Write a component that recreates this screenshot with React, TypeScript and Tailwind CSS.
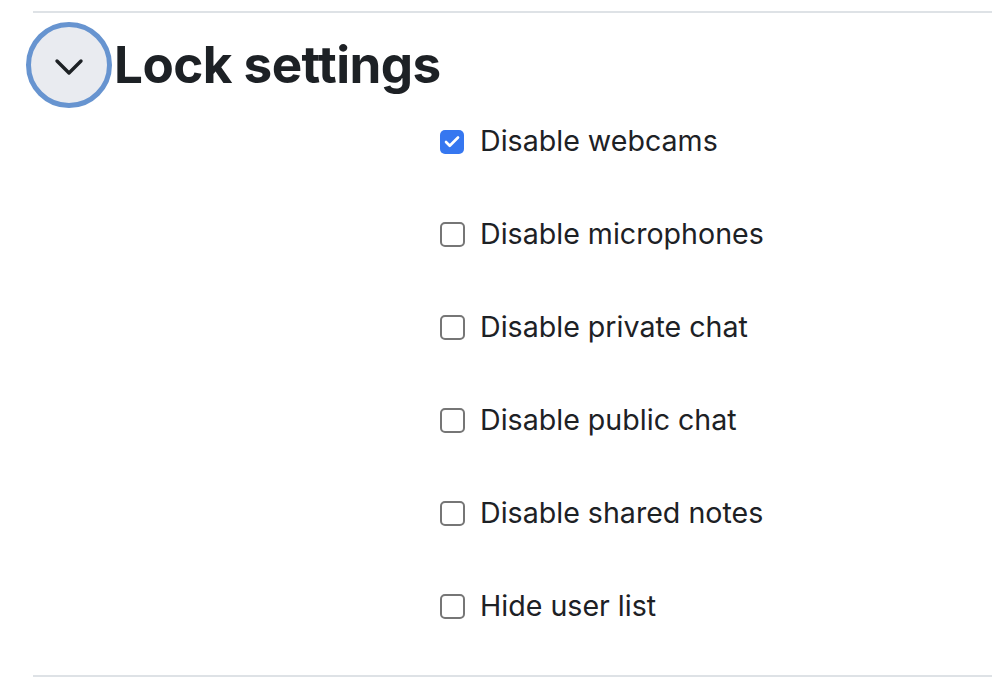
import { Check } from "lucide-react";

const options = [
  { label: "Disable webcams", checked: true },
  { label: "Disable microphones", checked: false },
  { label: "Disable private chat", checked: false },
  { label: "Disable public chat", checked: false },
  { label: "Disable shared notes", checked: false },
  { label: "Hide user list", checked: false },
];

export default function App() {
  return (
    <div className="min-h-[684px] w-[992px] bg-white pt-[11px] font-['Inter',sans-serif] text-[#1d2125]">
      <fieldset className="ml-[33px] border-t-2 border-b-2 border-[#dee2e6] pb-[22px]">
        {/* section header */}
        <div className="-ml-[7px] mt-[9px] flex items-center">
          <button className="flex h-[86px] w-[86px] items-center justify-center rounded-full border-[5px] border-[#6794d0] bg-[#e9ebf0]">
            <svg className="mt-[3px]" width="30" height="18" viewBox="0 0 30 18" fill="none" stroke="#1d2125" strokeWidth="3.4" strokeLinecap="round" strokeLinejoin="round">
              <path d="M3 3l12 12 12-12" />
            </svg>
          </button>
          <h3 className="ml-[2px] text-[51.2px] font-bold leading-none tracking-[-0.55px]">Lock settings</h3>
        </div>

        <div className="ml-[407px] -mt-[13px] flex flex-col">
          {options.map((o) => (
            <label key={o.label} className="flex h-[93px] items-center">
              <span
                className={
                  o.checked
                    ? "flex h-[24px] w-[24px] items-center justify-center rounded-[5px] bg-[#3677f0]"
                    : "h-[25px] w-[25px] rounded-[5px] border-2 border-[#767676] bg-white"
                }
              >
                {o.checked && <Check size={18} color="white" strokeWidth={3.5} />}
              </span>
              <span className={o.checked ? "ml-[16px] text-[28.6px]" : "ml-[15px] text-[28.6px]"}>{o.label}</span>
            </label>
          ))}
        </div>
      </fieldset>
    </div>
  );
}
